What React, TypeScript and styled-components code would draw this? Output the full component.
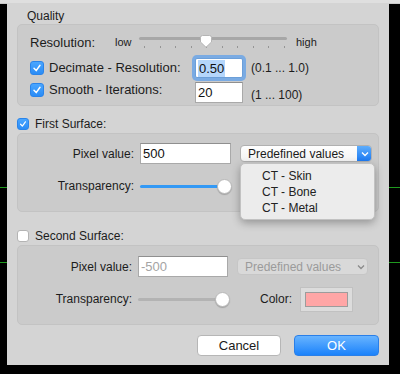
import React from "react";
import styled, { createGlobalStyle } from "styled-components";

const Global = createGlobalStyle`
  html, body { margin: 0; padding: 0; background: #000; }
  * { box-sizing: border-box; }
`;

const Page = styled.div`
  width: 400px;
  height: 374px;
  overflow: hidden;
  font-family: "Liberation Sans", Arial, sans-serif;
  color: #1c1c1c;
  background:
    linear-gradient(#1f9a1f, #1f9a1f) 0 187px / 100% 1px no-repeat,
    linear-gradient(#1f9a1f, #1f9a1f) 0 262px / 100% 1px no-repeat,
    #000;
`;

const TopStrip = styled.div`
  height: 4px;
  background: #dfdfdf;
  border-bottom: 1px solid #c9c9c9;
`;

const Dialog = styled.div`
  margin-left: 7px;
  margin-top: -1px;
  width: 382px;
  height: 362px;
  background: #d4d4d4;
  padding: 0 10px;
  display: flex;
  flex-direction: column;
`;

const SectionTitle = styled.div`
  padding: 6px 0 1px 10px;
  line-height: 14px;
  font-size: 12px;
`;

const GroupBox = styled.div<{ $h: number; $pt: number }>`
  height: ${(p) => p.$h}px;
  padding-top: ${(p) => p.$pt}px;
  background: #cbcbcb;
  border: 1px solid #c3c3c3;
  border-radius: 5px;
`;

const QualityBody = styled.div`
  padding-left: 12px;
`;

const Row = styled.div<{ $h: number; $mt?: number; $align?: string }>`
  display: flex;
  align-items: ${(p) => p.$align || "center"};
  height: ${(p) => p.$h}px;
  margin-top: ${(p) => p.$mt || 0}px;
`;

const BigLabel = styled.span<{ $w?: number }>`
  font-size: 13px;
  width: ${(p) => (p.$w ? `${p.$w}px` : "auto")};
  flex: none;
`;

const SmallText = styled.span<{ $w?: number; $ml?: number }>`
  font-size: 11px;
  width: ${(p) => (p.$w ? `${p.$w}px` : "auto")};
  margin-left: ${(p) => p.$ml || 0}px;
  flex: none;
`;

const CheckLabel = styled.label<{ $w?: number; $dy?: number; $size: number }>`
  display: flex;
  align-items: center;
  gap: ${(p) => (p.$size > 12 ? 5 : 6)}px;
  width: ${(p) => (p.$w ? `${p.$w}px` : "auto")};
  margin-top: ${(p) => p.$dy || 0}px;
  font-size: ${(p) => (p.$size > 12 ? 13 : 12)}px;
  line-height: 14px;
  flex: none;
`;

const Box = styled.span<{ $on: boolean; $size: number }>`
  width: ${(p) => p.$size}px;
  height: ${(p) => p.$size}px;
  border-radius: 3px;
  display: inline-flex;
  align-items: center;
  justify-content: center;
  flex: none;
  background: ${(p) => (p.$on ? "linear-gradient(#4aa6ff, #2a8cf6)" : "#fff")};
  border: 1px solid ${(p) => (p.$on ? "#2a84ea" : "#b4b4b4")};
`;

const Hint = styled.span<{ $dy?: number }>`
  font-size: 12px;
  line-height: 14px;
  margin-left: 8px;
  margin-top: ${(p) => p.$dy || 0}px;
`;

const TextInput = styled.div<{ $w: number; $h: number; $focus?: boolean; $disabled?: boolean; $ml?: number }>`
  width: ${(p) => p.$w}px;
  height: ${(p) => p.$h}px;
  margin-left: ${(p) => p.$ml || 0}px;
  background: #fff;
  border: 1px solid ${(p) => (p.$focus ? "#6c9fd8" : "#a9a9a9")};
  border-top-color: ${(p) => (p.$focus ? "#6c9fd8" : "#8f8f8f")};
  box-shadow: ${(p) => (p.$focus ? "0 0 0 3px rgba(95, 160, 235, 0.75)" : "none")};
  border-radius: ${(p) => (p.$focus ? 2 : 0)}px;
  padding-left: 2px;
  display: flex;
  align-items: center;
  font-size: 13px;
  color: ${(p) => (p.$disabled ? "#a4a4a4" : "#111")};
  flex: none;
`;

const Selected = styled.span`
  background: #b4d6fb;
  padding: 1px 1px;
`;

const FieldLabel = styled.span<{ $w: number }>`
  width: ${(p) => p.$w}px;
  text-align: right;
  font-size: 12px;
  flex: none;
`;

const SelectWrap = styled.div<{ $ml: number }>`
  position: relative;
  margin-left: ${(p) => p.$ml}px;
  flex: none;
`;

const SelectButton = styled.div<{ $w: number; $disabled?: boolean }>`
  width: ${(p) => p.$w}px;
  height: 17px;
  border-radius: 4px;
  border: 1px solid ${(p) => (p.$disabled ? "#c6c6c6" : "#b0b0b0")};
  background: ${(p) => (p.$disabled ? "#d9d9d9" : "linear-gradient(#fefefe, #f3f3f3)")};
  display: flex;
  align-items: center;
  font-size: 12px;
  color: ${(p) => (p.$disabled ? "#9b9b9b" : "#1a1a1a")};
  overflow: hidden;
`;

const SelectText = styled.span`
  flex: 1;
  padding-left: 7px;
  white-space: nowrap;
`;

const Arrow = styled.span<{ $disabled?: boolean }>`
  width: 15px;
  align-self: stretch;
  display: flex;
  align-items: center;
  justify-content: center;
  background: ${(p) => (p.$disabled ? "transparent" : "linear-gradient(#62b0fc, #1877f2)")};
  margin: -1px -1px -1px 0;
  border-radius: 0 4px 4px 0;
`;

const Menu = styled.div`
  position: absolute;
  top: 18px;
  left: 0;
  width: 135px;
  padding: 4px 0 3px;
  background: #ececec;
  border-radius: 5px;
  border: 1px solid #c2c2c2;
  box-shadow: 0 3px 9px rgba(0, 0, 0, 0.3);
  z-index: 5;
`;

const MenuItem = styled.div`
  height: 16px;
  line-height: 16px;
  padding-left: 21px;
  font-size: 12px;
  color: #222;
`;

const SliderTrack = styled.div<{ $w: number; $h: number; $ml?: number }>`
  position: relative;
  width: ${(p) => p.$w}px;
  height: ${(p) => p.$h}px;
  margin-left: ${(p) => p.$ml || 0}px;
  flex: none;
`;

const Rail = styled.div<{ $top: number; $color: string; $w: number }>`
  position: absolute;
  left: 0;
  top: ${(p) => p.$top}px;
  width: ${(p) => p.$w}px;
  height: 3px;
  border-radius: 2px;
  background: ${(p) => p.$color};
`;

const Tick = styled.div`
  position: absolute;
  top: 17px;
  width: 1px;
  height: 2px;
  background: #959595;
`;

const Knob = styled.div`
  position: absolute;
  top: 3px;
  width: 15px;
  height: 15px;
  border-radius: 50%;
  background: #fff;
  border: 1px solid #b9b9b9;
  box-shadow: 0 1px 1px rgba(0, 0, 0, 0.2);
`;

const PointerThumb = styled.svg`
  position: absolute;
  top: 6px;
`;

const ColorLabel = styled.span`
  font-size: 12px;
  margin-left: 31px;
`;

const Swatch = styled.div`
  width: 53px;
  height: 25px;
  margin-left: 8px;
  background: #dcdcdc;
  border: 1px solid #c1c1c1;
  padding: 4px;
  flex: none;
`;

const SwatchFill = styled.div`
  width: 100%;
  height: 100%;
  background: #ffa6a6;
  border: 1px solid #9c9c9c;
`;

const ButtonRow = styled.div`
  display: flex;
  justify-content: flex-end;
  gap: 13px;
  margin-top: 10px;
`;

const Button = styled.button<{ $primary?: boolean; $w: number }>`
  width: ${(p) => p.$w}px;
  height: 21px;
  border-radius: 4px;
  font-family: inherit;
  font-size: 13px;
  padding: 0;
  border: 1px solid ${(p) => (p.$primary ? "#2a7fe8" : "#b6b6b6")};
  background: ${(p) => (p.$primary ? "linear-gradient(#68b4ff, #1b82fb)" : "#fff")};
  color: ${(p) => (p.$primary ? "#fff" : "#1a1a1a")};
`;

function Check({ on, size }: { on: boolean; size: number }) {
  return (
    <Box $on={on} $size={size}>
      {on && (
        <svg width={size - 4} height={size - 4} viewBox="0 0 10 10">
          <path d="M2 5.3 L4.2 7.6 L8 2.3" fill="none" stroke="#fff" strokeWidth="1.5" strokeLinecap="round" strokeLinejoin="round" />
        </svg>
      )}
    </Box>
  );
}

function Chevron({ color }: { color: string }) {
  return (
    <svg width="8" height="6" viewBox="0 0 8 6">
      <path d="M1 1.5 L4 4.5 L7 1.5" fill="none" stroke={color} strokeWidth="1.3" />
    </svg>
  );
}

function TickSlider() {
  const ticks = Array.from({ length: 10 }, (_, i) => 5 + i * 15.5);
  return (
    <SliderTrack $w={148} $h={26}>
      <Rail $top={8} $w={148} $color="#a7a7a7" />
      {ticks.map((x) => (
        <Tick key={x} style={{ left: x }} />
      ))}
      <PointerThumb width="14" height="13" viewBox="0 0 14 13" style={{ left: 60 }}>
        <path d="M1.5 2.5 Q1.5 0.5 3.5 0.5 H10.5 Q12.5 0.5 12.5 2.5 V7 L7 12.3 L1.5 7 Z" fill="#fff" stroke="#b5b5b5" />
      </PointerThumb>
    </SliderTrack>
  );
}

function KnobSlider({ active, ml }: { active: boolean; ml: number }) {
  return (
    <SliderTrack $w={91} $h={20} $ml={ml}>
      <Rail $top={9} $w={86} $color={active ? "#3399f5" : "#b3b3b3"} />
      <Knob style={{ left: 77 }} />
    </SliderTrack>
  );
}

type SurfaceProps = {
  labelW: number;
  inputW: number;
  selectW: number;
  value: string;
  active: boolean;
};

function SurfaceFields({ labelW, inputW, selectW, value, active }: SurfaceProps) {
  return (
    <>
      <Row $h={21}>
        <FieldLabel $w={labelW}>Pixel value:</FieldLabel>
        <TextInput $w={inputW} $h={21} $ml={6} $disabled={!active}>
          {value}
        </TextInput>
        <SelectWrap $ml={9}>
          <SelectButton $w={selectW} $disabled={!active}>
            <SelectText>Predefined values</SelectText>
            <Arrow $disabled={!active}>
              <Chevron color={active ? "#fff" : "#8a8a8a"} />
            </Arrow>
          </SelectButton>
          {active && (
            <Menu>
              <MenuItem>CT - Skin</MenuItem>
              <MenuItem>CT - Bone</MenuItem>
              <MenuItem>CT - Metal</MenuItem>
            </Menu>
          )}
        </SelectWrap>
      </Row>
      <Row $h={20} $mt={12}>
        <FieldLabel $w={labelW}>Transparency:</FieldLabel>
        <KnobSlider active={active} ml={6} />
        {!active && (
          <>
            <ColorLabel>Color:</ColorLabel>
            <Swatch>
              <SwatchFill />
            </Swatch>
          </>
        )}
      </Row>
    </>
  );
}

const SurfaceHeader = styled.div<{ $h: number; $pt: number }>`
  height: ${(p) => p.$h}px;
  padding-top: ${(p) => p.$pt}px;
  display: flex;
  align-items: center;
`;

export default function App() {
  return (
    <Page>
      <Global />
      <TopStrip />
      <Dialog>
        <SectionTitle>Quality</SectionTitle>
        <GroupBox $h={82} $pt={4}>
          <QualityBody>
            <Row $h={26}>
              <BigLabel $w={85}>Resolution:</BigLabel>
              <SmallText $w={24}>low</SmallText>
              <TickSlider />
              <SmallText $ml={9}>high</SmallText>
            </Row>
            <Row $h={24} $mt={1}>
              <CheckLabel $w={165} $size={14}>
                <Check on size={14} />
                Decimate - Resolution:
              </CheckLabel>
              <TextInput $w={48} $h={20} $focus>
                <Selected>0.50</Selected>
              </TextInput>
              <Hint>(0.1 ... 1.0)</Hint>
            </Row>
            <Row $h={21} $mt={2} $align="flex-start">
              <CheckLabel $w={165} $size={14} $dy={1}>
                <Check on size={14} />
                Smooth - Iterations:
              </CheckLabel>
              <TextInput $w={48} $h={21}>20</TextInput>
              <Hint $dy={6}>(1 ... 100)</Hint>
            </Row>
          </QualityBody>
        </GroupBox>

        <SurfaceHeader $h={27} $pt={8}>
          <CheckLabel $size={12}>
            <Check on size={12} />
            First Surface:
          </CheckLabel>
        </SurfaceHeader>
        <GroupBox $h={79} $pt={9}>
          <SurfaceFields labelW={116} inputW={91} selectW={132} value="500" active />
        </GroupBox>

        <SurfaceHeader $h={33} $pt={14}>
          <CheckLabel $size={12}>
            <Check on={false} size={12} />
            Second Surface:
          </CheckLabel>
        </SurfaceHeader>
        <GroupBox $h={80} $pt={10}>
          <SurfaceFields labelW={114} inputW={90} selectW={131} value="-500" active={false} />
        </GroupBox>

        <ButtonRow>
          <Button $w={84}>Cancel</Button>
          <Button $w={85} $primary>
            OK
          </Button>
        </ButtonRow>
      </Dialog>
    </Page>
  );
}
